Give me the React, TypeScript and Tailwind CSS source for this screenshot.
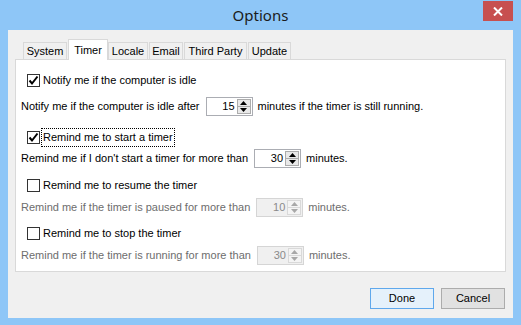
import React from 'react';

const font = { fontFamily: '"Liberation Sans", Arial, sans-serif' };

function Spin({ value, disabled }: { value: string; disabled?: boolean }) {
  const btn = disabled ? 'border-[#d9d9d9] bg-[#f4f4f4]' : 'border-[#acacac] bg-[#e9e9e9]';
  const arrow = disabled ? '#a8a8a8' : '#000';
  return (
    <div
      className={`flex h-[19px] w-[47px] border ${
        disabled ? 'border-[#d5d5d5] bg-[#f0f0f0] text-[#8a8a8a]' : 'border-[#abadb3] bg-white text-black'
      }`}
    >
      <div className="flex flex-1 items-center justify-end pr-[2px] text-[11px] leading-none">{value}</div>
      <div className="flex w-[15px] flex-col p-[1px] pl-0">
        <div className={`flex flex-1 items-center justify-center border ${btn}`}>
          <svg width="7" height="4" viewBox="0 0 7 4">
            <path d="M0 4 L3.5 0 L7 4 Z" fill={arrow} />
          </svg>
        </div>
        <div className={`flex flex-1 items-center justify-center border border-t-0 ${btn}`}>
          <svg width="7" height="4" viewBox="0 0 7 4">
            <path d="M0 0 L7 0 L3.5 4 Z" fill={arrow} />
          </svg>
        </div>
      </div>
    </div>
  );
}

function Check({ checked, label, focused }: { checked?: boolean; label: string; focused?: boolean }) {
  return (
    <div className="flex h-[20px] items-center pl-[11px]">
      <div className="flex h-[13px] w-[13px] items-center justify-center border border-[#333] bg-white">
        {checked && (
          <svg width="11" height="11" viewBox="0 0 11 11">
            <path d="M1.5 5.5 L4 8.5 L9.5 1.5" stroke="#000" strokeWidth="2" fill="none" />
          </svg>
        )}
      </div>
      <span
        className={`ml-[2px] px-[1px] text-[11px] leading-[17px] text-black ${
          focused ? 'outline outline-1 outline-dotted outline-black' : ''
        }`}
      >
        {label}
      </span>
    </div>
  );
}

function SpinRow({ before, value, disabled }: { before: string; value: string; disabled?: boolean }) {
  const txt = disabled ? 'text-[#6d6d6d]' : 'text-black';
  return (
    <div className={`flex h-[20px] items-center pl-[5px] text-[11px] ${txt}`}>
      <span>{before}</span>
      <div className="ml-[6px] mr-[5px]">
        <Spin value={value} disabled={disabled} />
      </div>
      <span>minutes.</span>
    </div>
  );
}

const tabs = [
  { name: 'System', w: 'w-[44px]' },
  { name: 'Timer', w: 'w-[40px]' },
  { name: 'Locale', w: 'w-[40px]' },
  { name: 'Email', w: 'w-[34px]' },
  { name: 'Third Party', w: 'w-[63px]' },
  { name: 'Update', w: 'w-[43px]' },
];

export default function App() {
  return (
    <div className="flex h-[325px] w-[521px] flex-col bg-[#8ec6f7]" style={font}>
      {/* title bar */}
      <div className="relative flex h-[30px] items-center justify-center">
        <span className="text-[15px] text-[#1b1b1b]" style={{ fontFamily: '"Noto Sans", "Liberation Sans", sans-serif' }}>
          Options
        </span>
        <div className="absolute right-[8px] top-[1px] flex h-[20px] w-[30px] items-center justify-center bg-[#c75050]">
          <svg width="10" height="9" viewBox="0 0 10 9">
            <path d="M1 0.5 L9 8.5 M9 0.5 L1 8.5" stroke="#fff" strokeWidth="2" />
          </svg>
        </div>
      </div>

      {/* client */}
      <div className="mx-[8px] mb-[7px] flex flex-1 flex-col bg-[#f0f0f0] px-[7px] pt-[9px]">
        <div className="flex h-[20px] items-end pl-[8px] text-[11px]">
          {tabs.map((t) =>
            t.name === 'Timer' ? (
              <div
                key={t.name}
                className={`relative z-10 -mb-[1px] flex h-[21px] ${t.w} items-start justify-center border border-b-0 border-[#d9d9d9] bg-white pt-[2px] text-black`}
              >
                {t.name}
              </div>
            ) : (
              <div
                key={t.name}
                className={`mr-[1px] flex h-[17px] ${t.w} items-center justify-center border border-b-0 border-[#d9d9d9] bg-[#f0f0f0] text-black`}
              >
                {t.name}
              </div>
            )
          )}
        </div>
        <div className="flex h-[213px] flex-col border border-[#d9d9d9] bg-white pt-[10px]">
          <Check checked label="Notify me if the computer is idle" />
          <div className="mt-[6px] flex h-[20px] items-center pl-[5px] text-[11px] text-black">
            <span>Notify me if the computer is idle after</span>
            <div className="ml-[6px] mr-[5px]">
              <Spin value="15" />
            </div>
            <span>minutes if the timer is still running.</span>
          </div>
          <div className="mt-[11px]">
            <Check checked focused label="Remind me to start a timer" />
          </div>
          <div className="mt-[1px]">
            <SpinRow before="Remind me if I don't start a timer for more than" value="30" />
          </div>
          <div className="mt-[7px]">
            <Check label="Remind me to resume the timer" />
          </div>
          <div className="mt-[2px]">
            <SpinRow before="Remind me if the timer is paused for more than" value="10" disabled />
          </div>
          <div className="mt-[6px]">
            <Check label="Remind me to stop the timer" />
          </div>
          <div className="mt-[2px]">
            <SpinRow before="Remind me if the timer is running for more than" value="30" disabled />
          </div>
        </div>

        <div className="mt-[16px] flex justify-end gap-[7px] pr-[1px]">
          <button className="flex h-[21px] w-[64px] items-center justify-center border border-[#5fa8ec] bg-[#e5f1fb] text-[11px] text-black">
            Done
          </button>
          <button className="flex h-[21px] w-[64px] items-center justify-center border border-[#acacac] bg-[#e1e1e1] text-[11px] text-black">
            Cancel
          </button>
        </div>
      </div>
    </div>
  );
}
